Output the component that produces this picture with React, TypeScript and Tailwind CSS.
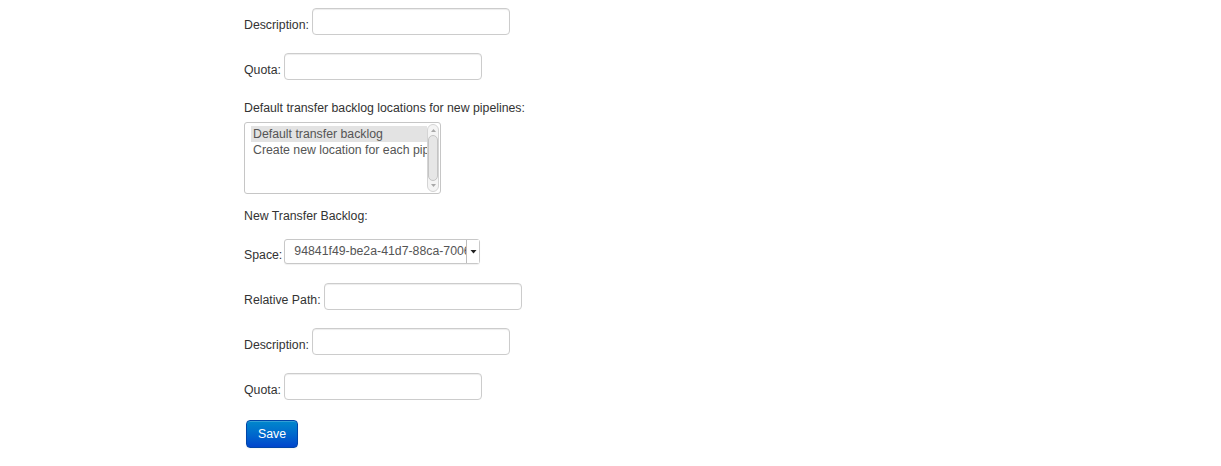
import React from "react";

const font = { fontFamily: '"Liberation Sans", Arial, Helvetica, sans-serif' };

function TextRow({
  label,
  className,
}: {
  label: string;
  className?: string;
}) {
  return (
    <div className={`flex items-end gap-[3px] ${className ?? ""}`}>
      <label className="leading-[18px] pb-[1px]">{label}</label>
      <input
        type="text"
        className="h-[27px] w-[198px] rounded-[4px] border border-[#cccccc] bg-white px-[6px] text-[12px] text-[#555555] shadow-[inset_0_1px_1px_rgba(0,0,0,0.075)] outline-none"
      />
    </div>
  );
}

function BacklogList() {
  const options = [
    "Default transfer backlog",
    "Create new location for each pipeline",
  ];

  return (
    <div className="mt-[5px] flex h-[72px] w-[197px] rounded-[3px] border border-[#c6c6c6] bg-white">
      <div className="flex-1 overflow-hidden pl-[6px] pt-[3px]">
        {options.map((opt, i) => (
          <div
            key={opt}
            className={`h-[16px] whitespace-nowrap leading-[16px] pl-[2px] text-[#555555] ${
              i === 0 ? "bg-[#e3e3e3] text-[#333333]" : ""
            }`}
          >
            {opt}
          </div>
        ))}
      </div>
      <div className="my-[1px] mr-[1px] flex w-[12px] flex-col items-center rounded-[6px] border border-[#d4d4d4] bg-[#f4f4f4]">
        <svg width="7" height="9" viewBox="0 0 7 9" className="mt-[1px]">
          <path d="M1 6 L3.5 3 L6 6 Z" fill="#a8a8a8" />
        </svg>
        <div className="w-[10px] flex-1 rounded-[5px] border border-[#c4c4c4] bg-[#e6e6e6]" />
        <svg width="7" height="9" viewBox="0 0 7 9" className="mb-[1px]">
          <path d="M1 3 L3.5 6 L6 3 Z" fill="#a8a8a8" />
        </svg>
      </div>
    </div>
  );
}

function SpaceSelect() {
  return (
    <div className="flex h-[25px] w-[196px] items-stretch rounded-[3px] border border-[#c8c8c8] bg-white shadow-[0_1px_1px_rgba(0,0,0,0.06)]">
      <div className="flex-1 overflow-hidden whitespace-nowrap pl-[9px] pr-[4px] leading-[23px] text-[#555555]">
        94841f49-be2a-41d7-88ca-7006e2a3f5b1
      </div>
      <div className="flex w-[13px] items-center justify-center border-l border-[#bdbdbd] bg-white">
        <svg width="7" height="5" viewBox="0 0 7 5">
          <path d="M0.5 1 L6.5 1 L3.5 4.5 Z" fill="#222222" />
        </svg>
      </div>
    </div>
  );
}

export default function App() {
  return (
    <main className="min-h-screen bg-white text-[12.3px] text-[#333333]" style={font}>
      <form className="ml-[244px] flex flex-col pt-[8px]">
        <TextRow label="Description:" />
        <TextRow label="Quota:" className="mt-[18px]" />

        <p className="mt-[19px] leading-[18px]">
          Default transfer backlog locations for new pipelines:
        </p>
        <BacklogList />

        <p className="mt-[13px] leading-[18px]">New Transfer Backlog:</p>

        <div className="mt-[14px] flex items-end gap-[2px]">
          <label className="leading-[18px]">Space:</label>
          <SpaceSelect />
        </div>

        <TextRow label="Relative Path:" className="mt-[19px]" />
        <TextRow label="Description:" className="mt-[18px]" />
        <TextRow label="Quota:" className="mt-[18px]" />

        <div className="mt-[20px] pl-[2px]">
          <button
            type="button"
            className="h-[28px] w-[52px] rounded-[4px] border border-[#0045a8] bg-gradient-to-b from-[#0088cc] to-[#0044cc] text-[12.3px] text-white shadow-[inset_0_1px_0_rgba(255,255,255,0.2),0_1px_2px_rgba(0,0,0,0.05)]"
          >
            Save
          </button>
        </div>
      </form>
    </main>
  );
}
